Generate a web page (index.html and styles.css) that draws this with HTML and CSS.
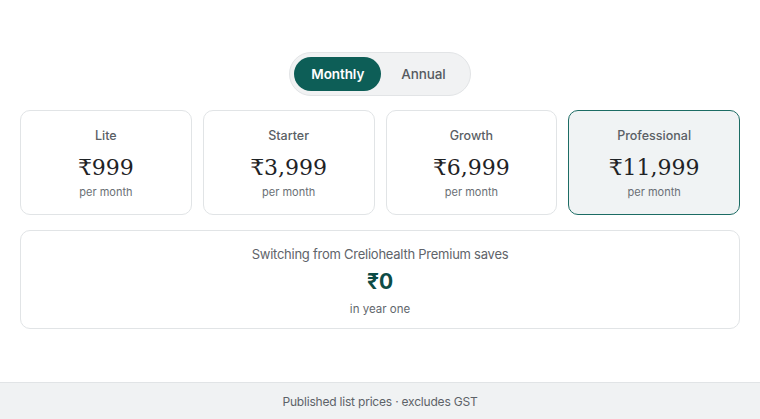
FILE: index.html
```html
<!DOCTYPE html>
<html lang="en">
<head>
<meta charset="utf-8">
<title>Pricing</title>
<link rel="stylesheet" href="styles.css">
</head>
<body>
<div class="page">
  <main class="main">
    <div class="toggle-wrap">
      <div class="toggle">
        <button class="toggle-btn active">Monthly</button>
        <button class="toggle-btn">Annual</button>
      </div>
    </div>
    <div class="plans">
      <div class="plan">
        <div class="plan-name">Lite</div>
        <div class="plan-price">₹999</div>
        <div class="plan-period">per month</div>
      </div>
      <div class="plan">
        <div class="plan-name">Starter</div>
        <div class="plan-price">₹3,999</div>
        <div class="plan-period">per month</div>
      </div>
      <div class="plan">
        <div class="plan-name">Growth</div>
        <div class="plan-price">₹6,999</div>
        <div class="plan-period">per month</div>
      </div>
      <div class="plan selected">
        <div class="plan-name">Professional</div>
        <div class="plan-price">₹11,999</div>
        <div class="plan-period">per month</div>
      </div>
    </div>
    <div class="savings">
      <div class="savings-label">Switching from Creliohealth Premium saves</div>
      <div class="savings-amount">₹0</div>
      <div class="savings-note">in year one</div>
    </div>
  </main>
  <footer class="footer">Published list prices · excludes GST</footer>
</div>
</body>
</html>
```
FILE: styles.css
```css
* { box-sizing: border-box; }
html, body { margin: 0; padding: 0; }
body {
  font-family: Inter, "Noto Sans", sans-serif;
  background: #ffffff;
  color: #333;
}
.page {
  min-height: 100vh;
  display: flex;
  flex-direction: column;
}
.main {
  flex: 1;
  padding: 52px 20px 0;
}
.toggle-wrap {
  display: flex;
  justify-content: center;
}
.toggle {
  display: flex;
  align-items: center;
  padding: 4px;
  background: #f1f2f3;
  border: 1px solid #e2e4e6;
  border-radius: 22px;
  height: 44px;
}
.toggle-btn {
  font-family: inherit;
  font-size: 13.5px;
  font-weight: 500;
  letter-spacing: -0.1px;
  border: 0;
  background: transparent;
  color: #555a60;
  height: 34px;
  padding: 0 20px;
  border-radius: 17px;
  cursor: pointer;
}
.toggle-btn.active {
  background: #0d5e57;
  color: #ffffff;
  font-weight: 600;
  padding: 0 17px;
}
.plans {
  display: grid;
  grid-template-columns: repeat(4, 1fr);
  gap: 11px;
  margin-top: 14px;
}
.plan {
  height: 105px;
  border: 1px solid #e1e4e6;
  border-radius: 10px;
  display: flex;
  flex-direction: column;
  align-items: center;
  padding-top: 17px;
  background: #fff;
}
.plan.selected {
  background: #f0f3f4;
  border-color: #1c6c64;
}
.plan-name {
  font-size: 12.5px;
  font-weight: 500;
  color: #5a5f65;
  line-height: 16px;
}
.plan-price {
  font-family: "DejaVu Serif", "Liberation Serif", serif;
  font-size: 22px;
  color: #1f2326;
  line-height: 28px;
  margin-top: 10px;
}
.plan-period {
  font-size: 11px;
  color: #6a6f75;
  line-height: 14px;
  margin-top: 3px;
}
.savings {
  margin-top: 15px;
  height: 99px;
  border: 1px solid #e1e4e6;
  border-radius: 10px;
  display: flex;
  flex-direction: column;
  align-items: center;
  padding-top: 14px;
}
.savings-label {
  font-size: 13px;
  letter-spacing: -0.25px;
  color: #5f646a;
  line-height: 18px;
}
.savings-amount {
  font-size: 21px;
  font-weight: 700;
  color: #0d4c46;
  line-height: 28px;
  margin-top: 5px;
}
.savings-note {
  font-size: 11.5px;
  color: #62676d;
  line-height: 14px;
  margin-top: 6px;
}
.footer {
  height: 37px;
  background: #f0f2f3;
  border-top: 1px solid #e1e4e6;
  display: flex;
  align-items: center;
  justify-content: center;
  font-size: 12px;
  letter-spacing: -0.2px;
  color: #5d6268;
}
```
